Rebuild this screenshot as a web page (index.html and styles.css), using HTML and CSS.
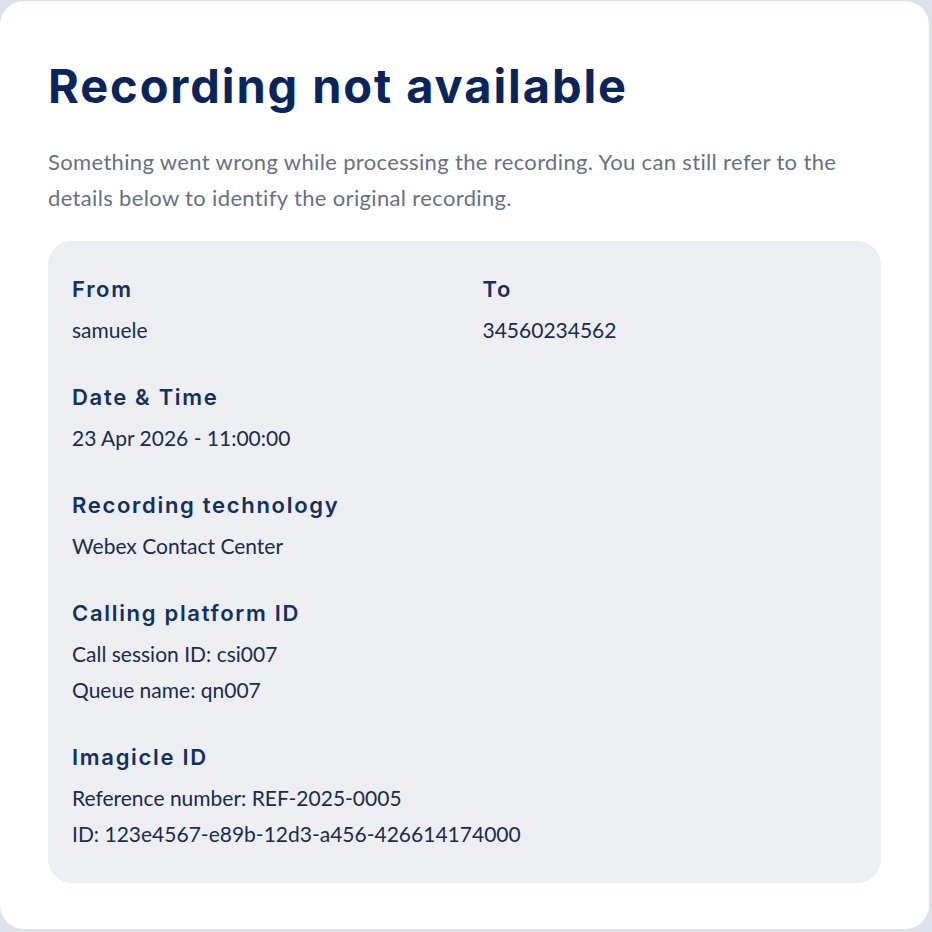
FILE: index.html
```html
<!DOCTYPE html>
<html lang="en">
<head>
<meta charset="utf-8">
<title>Recording not available</title>
<link rel="stylesheet" href="styles.css">
</head>
<body>
<main class="card">
  <h1 class="title">Recording not available</h1>
  <p class="intro">Something went wrong while processing the recording. You can still refer to the details below to identify the original recording.</p>
  <section class="details">
    <div class="grid">
      <div class="field">
        <h2 class="label">From</h2>
        <p class="value">samuele</p>
      </div>
      <div class="field">
        <h2 class="label">To</h2>
        <p class="value">34560234562</p>
      </div>
    </div>
    <div class="field">
      <h2 class="label">Date &amp; Time</h2>
      <p class="value">23 Apr 2026 - 11:00:00</p>
    </div>
    <div class="field">
      <h2 class="label">Recording technology</h2>
      <p class="value">Webex Contact Center</p>
    </div>
    <div class="field">
      <h2 class="label">Calling platform ID</h2>
      <p class="value">Call session ID: csi007</p>
      <p class="value">Queue name: qn007</p>
    </div>
    <div class="field">
      <h2 class="label">Imagicle ID</h2>
      <p class="value">Reference number: REF-2025-0005</p>
      <p class="value">ID: 123e4567-e89b-12d3-a456-426614174000</p>
    </div>
  </section>
</main>
</body>
</html>
```
FILE: styles.css
```css
html, body {
  margin: 0;
  padding: 0;
}
body {
  background: #dde2ea;
  width: 932px;
  height: 932px;
  overflow: hidden;
}
.card {
  box-sizing: border-box;
  margin: 1px 3px 0 0;
  width: 929px;
  height: 928px;
  background: #ffffff;
  border-radius: 24px;
  padding: 55px 48px 0 48px;
}
.title {
  margin: 0;
  font-family: "Inter", sans-serif;
  font-weight: 700;
  font-size: 47px;
  line-height: 60px;
  color: #0b2459;
  letter-spacing: 1.9px;
}
.intro {
  margin: 28px 0 0 0;
  max-width: 800px;
  font-family: "Lato", sans-serif;
  font-size: 22px;
  letter-spacing: 0.35px;
  line-height: 36px;
  color: #677184;
}
.details {
  margin-top: 25px;
  background: #edeef2;
  border-radius: 24px;
  height: 642px;
  box-sizing: border-box;
  padding: 30px 24px 0 24px;
}
.grid {
  display: grid;
  grid-template-columns: 1fr 1fr;
  column-gap: 36px;
}
.field {
  margin-bottom: 31px;
}
.label {
  margin: 0 0 5px 0;
  font-family: "Inter", sans-serif;
  font-weight: 600;
  font-size: 22px;
  line-height: 36px;
  letter-spacing: 1.7px;
  color: #13305e;
}
.value {
  margin: 0;
  font-family: "Lato", sans-serif;
  font-size: 21px;
  line-height: 36px;
  color: #1b2b4b;
}
```
